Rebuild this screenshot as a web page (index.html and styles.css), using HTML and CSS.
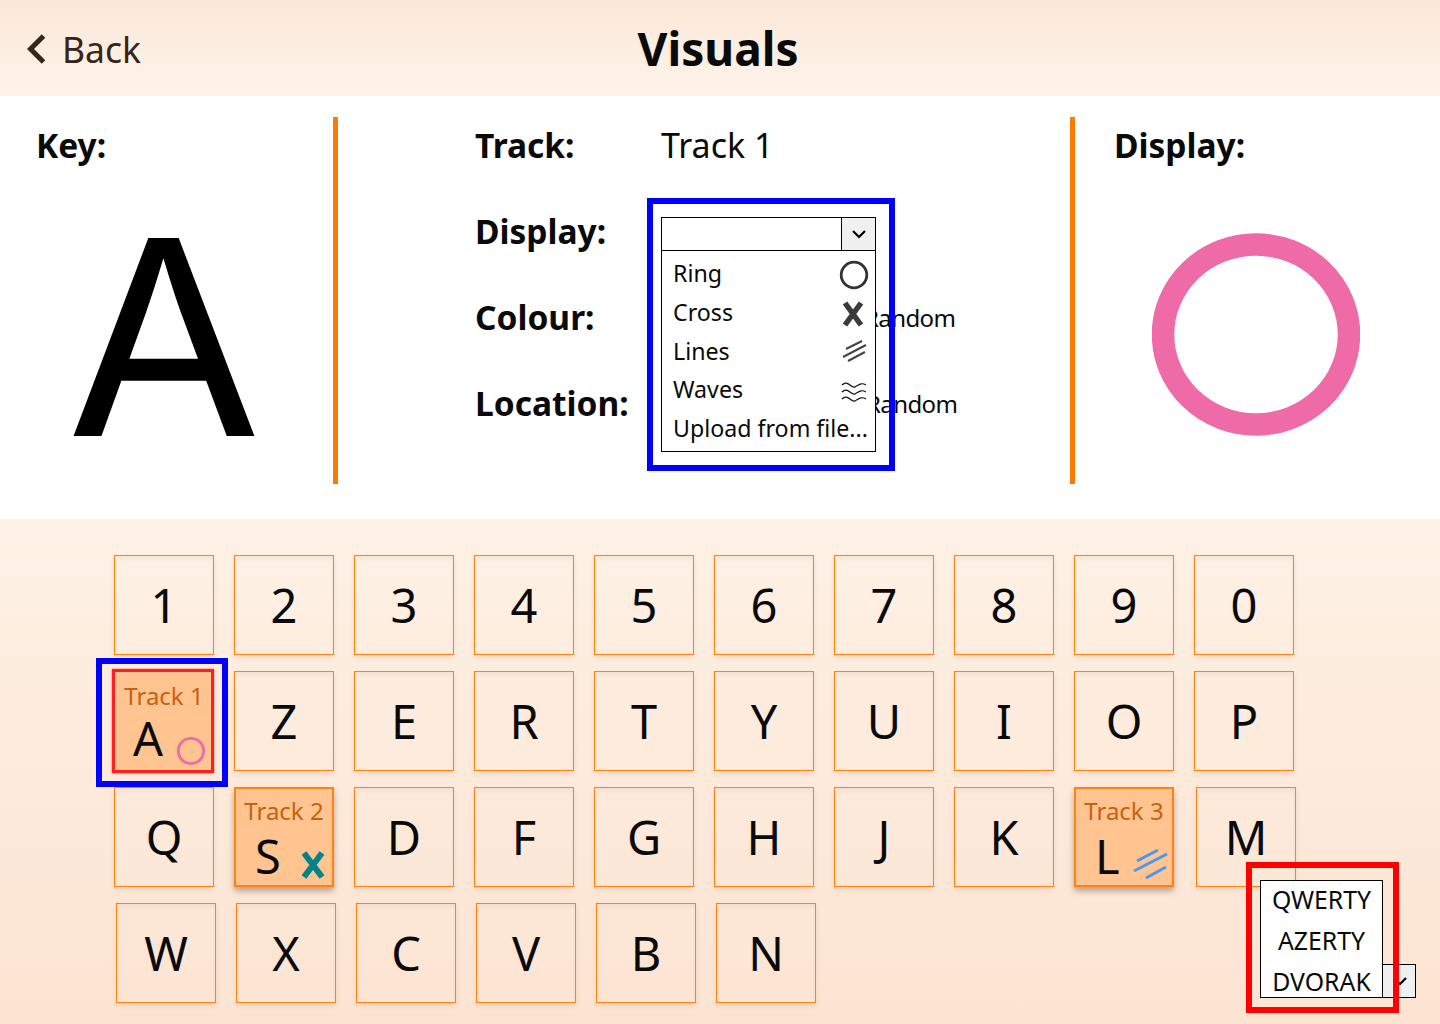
FILE: index.html
```html
<!DOCTYPE html>
<html lang="en">
<head>
<meta charset="utf-8">
<title>Visuals</title>
<link rel="stylesheet" href="styles.css">
</head>
<body>
<header class="topbar">
  <a class="back"><svg class="back-icon" viewBox="0 0 19 30"><path d="M16.500 2 3.500 15l13 13" fill="none" stroke="#35251a" stroke-width="5"/></svg><span>Back</span></a>
  <h1 class="title">Visuals</h1>
</header>
<main class="panel">
  <section class="key-col">
    <h2 class="label">Key:</h2>
    <div class="big-key">A</div>
  </section>
  <div class="divider"></div>
  <section class="form-col">
    <div class="row"><span class="label">Track:</span><span class="value">Track 1</span></div>
    <div class="row"><span class="label">Display:</span></div>
    <div class="row"><span class="label">Colour:</span><span class="random">Random</span></div>
    <div class="row"><span class="label">Location:</span><span class="random random-b">Random</span></div>
    <div class="dropdown">
      <div class="dd-head"><span class="dd-blank"></span><span class="dd-arrow"><svg viewBox="0 0 14 10" class="chev"><path d="M1 2l6 6 6-6" fill="none" stroke="#000" stroke-width="2.200"/></svg></span></div>
      <ul class="dd-list">
        <li><span>Ring</span><svg class="ico" viewBox="0 0 30 30"><circle cx="15" cy="15" r="12.800" fill="none" stroke="#333" stroke-width="2.800"/></svg></li>
        <li><span>Cross</span><svg class="ico" viewBox="0 0 30 30"><path d="M6 4l16 22M22 4 6 26" fill="none" stroke="#3a3a3a" stroke-width="5.500"/></svg></li>
        <li><span>Lines</span><svg class="ico" viewBox="0 0 30 30"><path d="M7 12 23 4M4 20 27 8M9 24l17-9" fill="none" stroke="#444" stroke-width="2"/></svg></li>
        <li><span>Waves</span><svg class="ico" viewBox="0 0 30 30"><path d="M3 9c6-6 9 4 13 2s6-5 11-2M3 16c6-6 9 4 13 2s6-5 11-2M3 23c6-6 9 4 13 2s6-5 11-2" fill="none" stroke="#111" stroke-width="1.200"/></svg></li>
        <li><span>Upload from file...</span></li>
      </ul>
    </div>
    <div class="frame frame-blue-dd"></div>
  </section>
  <div class="divider"></div>
  <section class="display-col">
    <h2 class="label">Display:</h2>
    <svg class="ring" viewBox="0 0 208 203"><ellipse cx="104" cy="101.500" rx="93" ry="90" fill="none" stroke="#ee6ba8" stroke-width="22.500"/></svg>
  </section>
</main>
<section class="keyboard">
  <div class="kb-row">
    <div class="key">1</div><div class="key">2</div><div class="key">3</div><div class="key">4</div><div class="key">5</div><div class="key">6</div><div class="key">7</div><div class="key">8</div><div class="key">9</div><div class="key">0</div>
  </div>
  <div class="kb-row">
    <div class="key key-on key-sel">
      <span class="track">Track 1</span><span class="letter">A</span>
      <svg class="mini" viewBox="0 0 32 32"><circle cx="16" cy="16" r="13.500" fill="none" stroke="#ee6ba8" stroke-width="3"/></svg>
      <div class="frame frame-blue-key"></div>
    </div>
    <div class="key">Z</div><div class="key">E</div><div class="key">R</div><div class="key">T</div><div class="key">Y</div><div class="key">U</div><div class="key">I</div><div class="key">O</div><div class="key">P</div>
  </div>
  <div class="kb-row">
    <div class="key">Q</div>
    <div class="key key-on"><span class="track">Track 2</span><span class="letter">S</span>
      <svg class="mini mini-x" viewBox="0 0 24 28"><path d="M3 2l18 24M21 2 3 26" fill="none" stroke="#00838a" stroke-width="6"/></svg></div>
    <div class="key">D</div><div class="key">F</div><div class="key">G</div><div class="key">H</div><div class="key">J</div><div class="key">K</div>
    <div class="key key-on key-l"><span class="track">Track 3</span><span class="letter">L</span>
      <svg class="mini" viewBox="0 0 36 32"><path d="M4 13 25 2M1 23 34 6M13 30 33 19" fill="none" stroke="#4a98f0" stroke-width="3"/></svg></div>
    <div class="key key-m">M</div>
  </div>
  <div class="kb-row kb-last">
    <div class="key">W</div><div class="key">X</div><div class="key">C</div><div class="key">V</div><div class="key">B</div><div class="key">N</div>
  </div>
  <div class="layout-select">
    <span class="ls-arrow"><svg viewBox="0 0 14 10" class="chev"><path d="M1 2l6 6 6-6" fill="none" stroke="#000" stroke-width="2.200"/></svg></span>
    <ul class="ls-list"><li>QWERTY</li><li>AZERTY</li><li>DVORAK</li></ul>
    <div class="frame frame-red"></div>
  </div>
</section>
</body>
</html>
```
FILE: styles.css
```css
* { box-sizing: border-box; margin: 0; padding: 0; }
*::before { box-sizing: border-box; }
html, body { width: 1440px; height: 1024px; overflow: hidden; }
body { font-family: "Noto Sans", "DejaVu Sans", sans-serif; color: #0a0a0a; background: #fff; }

.topbar { height: 96px; position: relative; display: flex; align-items: center; justify-content: center;
  background: linear-gradient(#fce8d8, #fef3ea); }
.back { position: absolute; left: 27px; top: 30px; display: flex; align-items: center; gap: 16px; font-size: 35.500px; line-height: 38px; color: #35251a; }
.back-icon { width: 19px; height: 30px; }
.title { font-size: 46px; line-height: 96px; font-weight: 700; margin-left: -4px; }

.panel { height: 423px; display: flex; padding-top: 21px; background: #fff; }
.divider { width: 5px; height: 367px; background: #ff7a00; flex: none; }
.label { font-size: 33.500px; line-height: 56px; font-weight: 700; display: block; }
.key-col { width: 333px; padding-left: 36px; flex: none; }
.big-key { font-family: "Inter", "Liberation Sans", sans-serif; font-size: 272px; line-height: 300px; margin-top: 14px; color: #000; margin-left: 32px; transform: scaleX(1.04); transform-origin: 40px 0; }

.form-col { width: 732px; flex: none; padding-left: 137px; position: relative; }
.row { height: 86px; display: flex; position: relative; }
.row .label { width: 186px; }
.value { font-size: 34px; line-height: 56px; }
.random { font-size: 24px; line-height: 58px; position: absolute; left: 389px; letter-spacing: -.6px; }
.random-b { left: 391px; }

.dropdown { position: absolute; left: 323px; top: 100px; width: 215px; height: 235px; border: 1px solid #000; background: #fff; font-size: 23.200px; }
.dd-head { height: 33px; display: flex; border-bottom: 1px solid #000; }
.dd-blank { flex: 1; border-right: 1px solid #000; }
.dd-arrow { width: 33px; background: #f0f0f0; display: flex; align-items: center; justify-content: center; }
.chev { width: 14px; height: 10px; display: block; }
.dd-list { list-style: none; padding: 3px 6px 0 11px; }
.dd-list li { height: 38.700px; display: flex; align-items: center; justify-content: space-between; line-height: 38px; white-space: nowrap; }
.ico { width: 30px; height: 30px; flex: none; margin-top: 3px; }

.frame { position: absolute; pointer-events: none; }
.frame-blue-dd { left: 309px; top: 81px; width: 248px; height: 273px; border: 6px solid #0000ff; }

.display-col { flex: 1; padding-left: 39px; position: relative; }
.ring { position: absolute; left: 77px; top: 116px; width: 208px; height: 203px; }

.keyboard { height: 505px; position: relative; padding: 36px 0 0 114px; display: flex; flex-direction: column; gap: 16px;
  background: linear-gradient(#fef1e5, #fce4d2); }
.kb-row { display: flex; gap: 20px; }
.kb-last { padding-left: 2px; }
.key { width: 100px; height: 100px; flex: none; border: 1px solid #ff8311; display: flex; align-items: center; justify-content: center;
  font-size: 47px; position: relative; box-shadow: 0 3px 5px rgba(90, 50, 20, .1), inset 0 3px 4px rgba(90, 50, 20, .06); color: #0a0a0a; }
.key-m { margin-left: 2px; }
.key-on { background: #ffc48f; border: 2px solid #ff8311; box-shadow: 0 4px 6px rgba(60, 30, 10, .35); display: block; }
.key-sel { border: none; box-shadow: none; background: none; }
.key-sel::before { content: ""; position: absolute; left: -2px; top: -2px; width: 102px; height: 104px; background: #ffc48f; border: 3px solid #ff1f1f; box-shadow: 0 0 2px #ff5a5a; }
.track { position: absolute; left: 0; right: 0; top: 6px; text-align: center; font-size: 24px; line-height: 32px; color: #c8610f; }
.key-sel .track { top: 9px; }
.letter { position: absolute; left: 19px; top: 35px; font-size: 47px; line-height: 64px; }
.mini { position: absolute; right: 8px; bottom: 5px; width: 30px; height: 30px; }
.mini-x { width: 24px; height: 28px; right: 7px; bottom: 6px; }
.key-l .mini { width: 36px; height: 32px; right: 3px; bottom: 5px; }
.frame-blue-key { left: -18px; top: -13px; width: 132px; height: 129px; border: 6px solid #0000ff; }

.layout-select { position: absolute; left: 1260px; top: 361px; width: 156px; height: 118px; }
.ls-arrow { position: absolute; right: 0; bottom: 0; width: 34px; height: 34px; border: 1px solid #000; background: #f0f0f0; display: flex; align-items: center; justify-content: flex-end; padding-right: 8px; }
.ls-list { list-style: none; position: absolute; left: 0; top: 0; width: 123px; height: 118px; border: 1px solid #000; background: #fff; font-size: 24.800px; text-align: center; }
.ls-list li { height: 41px; line-height: 36px; white-space: nowrap; }
.frame-red { left: -14px; top: -18px; width: 153px; height: 151px; border: 6px solid #ff0000; }
```
